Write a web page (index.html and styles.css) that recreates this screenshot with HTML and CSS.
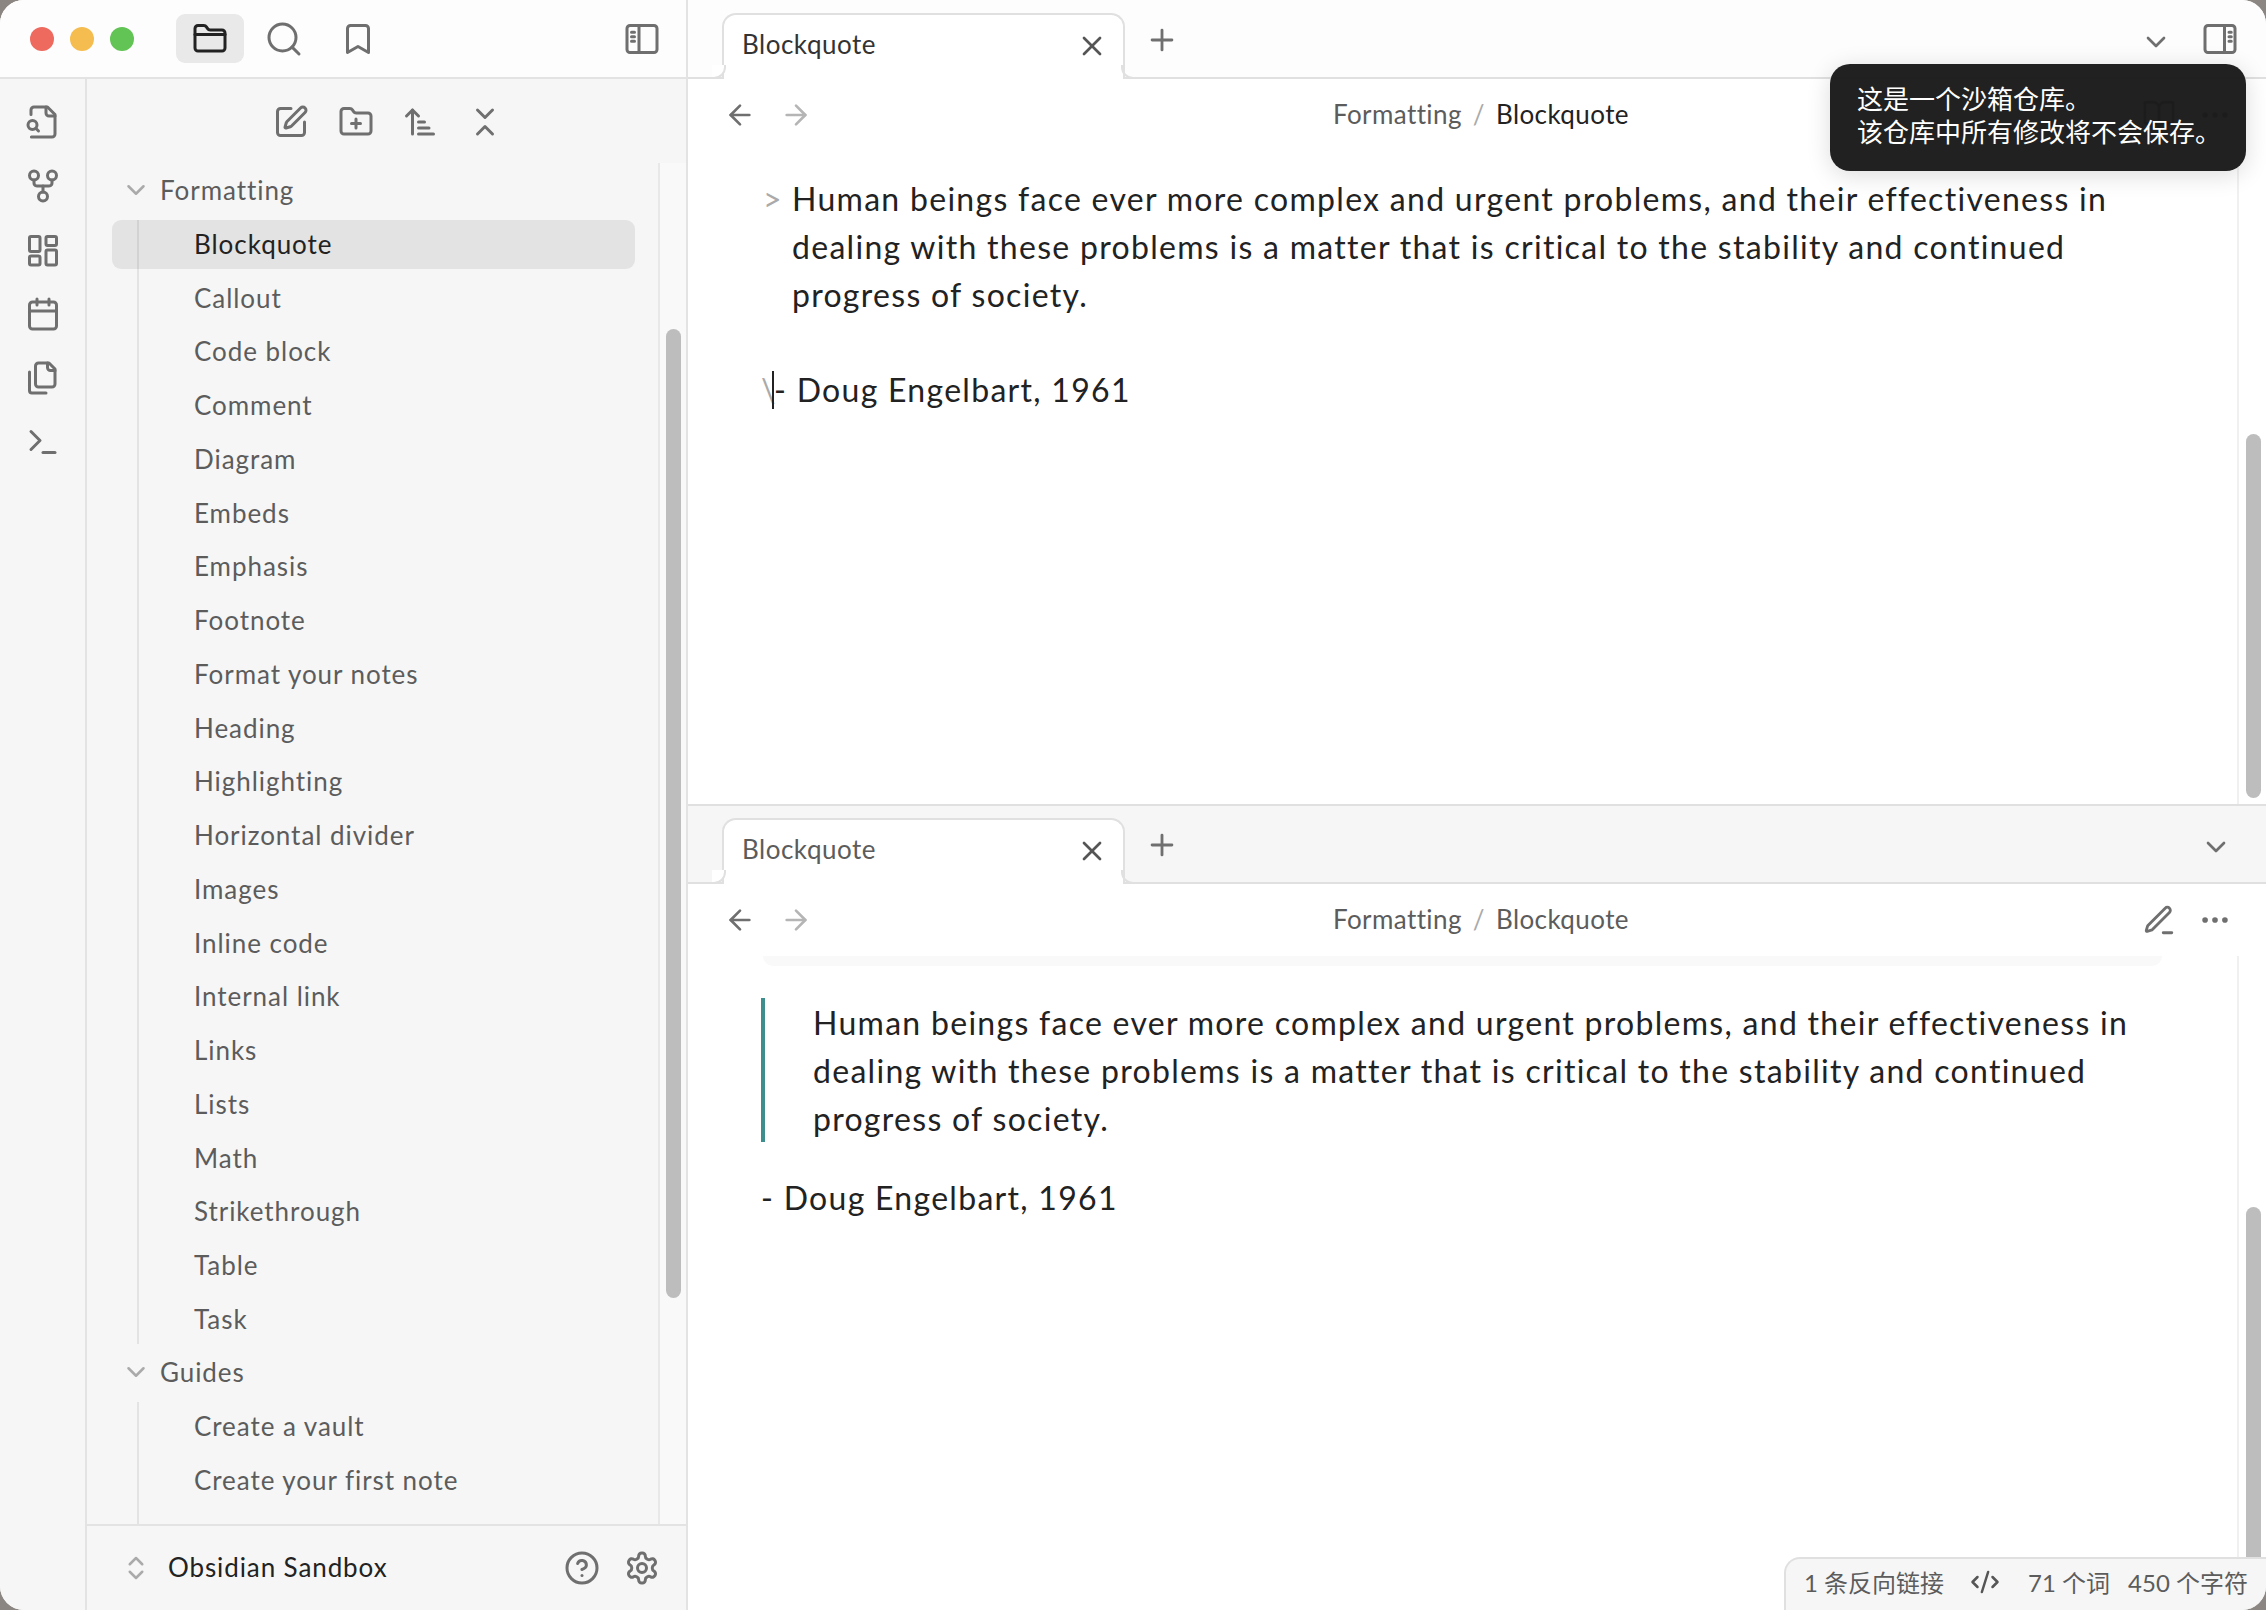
FILE: index.html
```html
<!DOCTYPE html>
<html>
<head>
<meta charset="utf-8"/>
<title>Blockquote - Obsidian Sandbox</title>
<link rel="stylesheet" href="styles.css">
</head>
<body>

<svg class="defs" width="0" height="0">
  <symbol id="i-folder" viewBox="0 0 24 24"><path d="M20 20a2 2 0 0 0 2-2V8a2 2 0 0 0-2-2h-7.9a2 2 0 0 1-1.69-.9L9.6 3.9A2 2 0 0 0 7.93 3H4a2 2 0 0 0-2 2v13a2 2 0 0 0 2 2Z"/><path d="M2 9h20"/></symbol>
  <symbol id="i-search" viewBox="0 0 24 24"><circle cx="11" cy="11" r="9"/><path d="m22 22-4.6-4.6"/></symbol>
  <symbol id="i-bookmark" viewBox="0 0 24 24"><path d="m19 21-7-4-7 4V5a2 2 0 0 1 2-2h10a2 2 0 0 1 2 2v16z"/></symbol>
  <symbol id="i-side-left" viewBox="0 0 24 24"><rect x="2" y="3" width="20" height="18" rx="2"/><path d="M10 3v18M5 7.5h2M5 10.5h2M5 13.5h2"/></symbol>
  <symbol id="i-side-right" viewBox="0 0 24 24"><rect x="2" y="3" width="20" height="18" rx="2"/><path d="M15 3v18M18 7.5h1.5M18 10.5h1.5M18 13.5h1.5"/></symbol>
  <symbol id="i-file-search" viewBox="0 0 24 24"><path d="M14 2v4a2 2 0 0 0 2 2h4"/><path d="M4.268 22H18a2 2 0 0 0 2-2V7l-5-5H6a2 2 0 0 0-2 2v3"/><circle cx="5" cy="14" r="3"/><path d="m9 18-1.8-1.8"/></symbol>
  <symbol id="i-graph" viewBox="0 0 24 24"><circle cx="12" cy="19" r="3"/><circle cx="6" cy="5" r="3"/><circle cx="18" cy="5" r="3"/><path d="M18 8v2c0 .6-.4 2-2 2H8c-1.600 0-2-1.400-2-2V8"/><path d="M12 12v4"/></symbol>
  <symbol id="i-dash" viewBox="0 0 24 24"><rect x="3" y="3" width="7" height="10" rx="1"/><rect x="14" y="3" width="7" height="6" rx="1"/><rect x="14" y="12" width="7" height="10" rx="1"/><rect x="3" y="16" width="7" height="6" rx="1"/></symbol>
  <symbol id="i-calendar" viewBox="0 0 24 24"><path d="M8 2v4M16 2v4"/><rect x="3" y="4" width="18" height="18" rx="2"/><path d="M3 10h18"/></symbol>
  <symbol id="i-files" viewBox="0 0 24 24"><path d="M20 7h-3a2 2 0 0 1-2-2V2"/><path d="M9 18a2 2 0 0 1-2-2V4a2 2 0 0 1 2-2h7l4 4v10a2 2 0 0 1-2 2Z"/><path d="M3 8v12.400A1.600 1.600 0 0 0 4.600 22H14"/></symbol>
  <symbol id="i-terminal" viewBox="0 0 24 24"><path d="m4 17 6-6-6-6"/><path d="M12 19h8"/></symbol>
  <symbol id="i-pen" viewBox="0 0 24 24"><path d="M12 3H5a2 2 0 0 0-2 2v14a2 2 0 0 0 2 2h14a2 2 0 0 0 2-2v-7"/><path d="M18.375 2.625a1 1 0 0 1 3 3l-9.013 9.014a2 2 0 0 1-.853.505l-2.873.84a.5.5 0 0 1-.62-.62l.84-2.873a2 2 0 0 1 .506-.852z"/></symbol>
  <symbol id="i-folder-plus" viewBox="0 0 24 24"><path d="M12 10v6M9 13h6"/><path d="M20 20a2 2 0 0 0 2-2V8a2 2 0 0 0-2-2h-7.9a2 2 0 0 1-1.69-.9L9.6 3.900A2 2 0 0 0 7.930 3H4a2 2 0 0 0-2 2v13a2 2 0 0 0 2 2Z"/></symbol>
  <symbol id="i-sort" viewBox="0 0 24 24"><path d="m3 8 4-4 4 4"/><path d="M7 4v16"/><path d="M11 12h4M11 16h7M11 20h10"/></symbol>
  <symbol id="i-collapse" viewBox="0 0 24 24"><path d="m7 20 5-5 5 5"/><path d="m7 4 5 5 5-5"/></symbol>
  <symbol id="i-chevron" viewBox="0 0 24 24"><path d="m6 9 6 6 6-6"/></symbol>
  <symbol id="i-updown" viewBox="0 0 24 24"><path d="m7 15 5 5 5-5"/><path d="m7 9 5-5 5 5"/></symbol>
  <symbol id="i-help" viewBox="0 0 24 24"><circle cx="12" cy="12" r="10"/><path d="M9.090 9a3 3 0 0 1 5.830 1c0 2-3 3-3 3"/><path d="M12 17h.01"/></symbol>
  <symbol id="i-gear" viewBox="0 0 24 24"><path d="M12.220 2h-.44a2 2 0 0 0-2 2v.18a2 2 0 0 1-1 1.730l-.43.25a2 2 0 0 1-2 0l-.15-.08a2 2 0 0 0-2.730.73l-.22.38a2 2 0 0 0 .73 2.730l.15.1a2 2 0 0 1 1 1.720v.51a2 2 0 0 1-1 1.740l-.15.09a2 2 0 0 0-.73 2.730l.22.38a2 2 0 0 0 2.730.73l.15-.08a2 2 0 0 1 2 0l.43.25a2 2 0 0 1 1 1.730V20a2 2 0 0 0 2 2h.44a2 2 0 0 0 2-2v-.18a2 2 0 0 1 1-1.730l.43-.25a2 2 0 0 1 2 0l.15.08a2 2 0 0 0 2.730-.73l.22-.39a2 2 0 0 0-.73-2.730l-.15-.08a2 2 0 0 1-1-1.740v-.5a2 2 0 0 1 1-1.740l.15-.09a2 2 0 0 0 .73-2.730l-.22-.38a2 2 0 0 0-2.730-.73l-.15.08a2 2 0 0 1-2 0l-.43-.25a2 2 0 0 1-1-1.730V4a2 2 0 0 0-2-2z"/><circle cx="12" cy="12" r="3"/></symbol>
  <symbol id="i-x" viewBox="0 0 24 24"><path d="M18 6 6 18"/><path d="m6 6 12 12"/></symbol>
  <symbol id="i-plus" viewBox="0 0 24 24"><path d="M5 12h14M12 5v14"/></symbol>
  <symbol id="i-back" viewBox="0 0 24 24"><path d="m12 19-7-7 7-7"/><path d="M19 12H5"/></symbol>
  <symbol id="i-forward" viewBox="0 0 24 24"><path d="M5 12h14"/><path d="m12 5 7 7-7 7"/></symbol>
  <symbol id="i-edit" viewBox="0 0 24 24"><path d="M15 21h6"/><path d="M16.376 3.622a1 1 0 0 1 3.002 3.002L7.368 18.635a2 2 0 0 1-.855.506l-2.872.838a.5.5 0 0 1-.62-.62l.838-2.872a2 2 0 0 1 .506-.854z"/></symbol>
  <symbol id="i-book" viewBox="0 0 24 24"><path d="M12 7v14"/><path d="M3 18a1 1 0 0 1-1-1V4a1 1 0 0 1 1-1h5a4 4 0 0 1 4 4 4 4 0 0 1 4-4h5a1 1 0 0 1 1 1v13a1 1 0 0 1-1 1h-6a3 3 0 0 0-3 3 3 3 0 0 0-3-3z"/></symbol>
  <symbol id="i-more" viewBox="0 0 24 24"><circle cx="5" cy="12" r="1"/><circle cx="12" cy="12" r="1"/><circle cx="19" cy="12" r="1"/></symbol>
  <symbol id="i-code" viewBox="0 0 24 24"><path d="m18 16 4-4-4-4"/><path d="m6 8-4 4 4 4"/><path d="m14.500 4-5 16"/></symbol>
</svg>

<div class="window">

  <aside class="left">
    <header class="titlebar">
      <div class="lights">
        <span class="light red"></span>
        <span class="light amber"></span>
        <span class="light green"></span>
      </div>
      <div class="tabs-left">
        <span class="tbtn active"><svg class="icon"><use href="#i-folder"/></svg></span>
        <span class="tbtn"><svg class="icon"><use href="#i-search"/></svg></span>
        <span class="tbtn"><svg class="icon"><use href="#i-bookmark"/></svg></span>
      </div>
      <svg class="icon toggle-left"><use href="#i-side-left"/></svg>
    </header>

    <div class="left-body">
      <nav class="ribbon">
        <svg class="icon"><use href="#i-file-search"/></svg>
        <svg class="icon"><use href="#i-graph"/></svg>
        <svg class="icon"><use href="#i-dash"/></svg>
        <svg class="icon"><use href="#i-calendar"/></svg>
        <svg class="icon"><use href="#i-files"/></svg>
        <svg class="icon"><use href="#i-terminal"/></svg>
      </nav>

      <div class="sidebar">
        <div class="side-tools">
          <svg class="icon"><use href="#i-pen"/></svg>
          <svg class="icon"><use href="#i-folder-plus"/></svg>
          <svg class="icon"><use href="#i-sort"/></svg>
          <svg class="icon"><use href="#i-collapse"/></svg>
        </div>

        <div class="side-scroll">
          <div class="tree">
            <div class="folder"><svg class="icon fold"><use href="#i-chevron"/></svg>Formatting</div>
            <div class="children">
              <div class="note current">Blockquote</div>
              <div class="note">Callout</div>
              <div class="note">Code block</div>
              <div class="note">Comment</div>
              <div class="note">Diagram</div>
              <div class="note">Embeds</div>
              <div class="note">Emphasis</div>
              <div class="note">Footnote</div>
              <div class="note">Format your notes</div>
              <div class="note">Heading</div>
              <div class="note">Highlighting</div>
              <div class="note">Horizontal divider</div>
              <div class="note">Images</div>
              <div class="note">Inline code</div>
              <div class="note">Internal link</div>
              <div class="note">Links</div>
              <div class="note">Lists</div>
              <div class="note">Math</div>
              <div class="note">Strikethrough</div>
              <div class="note">Table</div>
              <div class="note">Task</div>
            </div>
            <div class="folder"><svg class="icon fold"><use href="#i-chevron"/></svg>Guides</div>
            <div class="children children-last">
              <div class="note">Create a vault</div>
              <div class="note">Create your first note</div>
            </div>
          </div>
          <div class="side-gutter"><div class="thumb side-thumb"></div></div>
        </div>

        <footer class="vault">
          <svg class="icon updown"><use href="#i-updown"/></svg>
          <span class="vault-name">Obsidian Sandbox</span>
          <svg class="icon help"><use href="#i-help"/></svg>
          <svg class="icon"><use href="#i-gear"/></svg>
        </footer>
      </div>
    </div>
  </aside>

  <main class="right">

    <section class="pane pane-top">
      <header class="tabbar tabbar-light">
        <div class="tab">
          <span class="tab-title">Blockquote</span>
          <svg class="icon close"><use href="#i-x"/></svg>
        </div>
        <svg class="icon newtab"><use href="#i-plus"/></svg>
        <svg class="icon tabmenu"><use href="#i-chevron"/></svg>
        <svg class="icon toggle-right"><use href="#i-side-right"/></svg>
      </header>
      <div class="navbar">
        <svg class="icon nav-back"><use href="#i-back"/></svg>
        <svg class="icon nav-fwd"><use href="#i-forward"/></svg>
        <div class="crumbs"><span>Formatting</span><span class="sep">/</span><span class="crumb-now">Blockquote</span></div>
        <svg class="icon nav-mode"><use href="#i-book"/></svg>
        <svg class="icon nav-more"><use href="#i-more"/></svg>
      </div>
      <div class="pane-body">
        <div class="doc doc-source">
          <div class="src-quote">
            <span class="mark mark-quote">&gt;</span>
            <p>Human beings face ever more complex and urgent problems, and their effectiveness in<br>dealing with these problems is a matter that is critical to the stability and continued<br>progress of society.</p>
          </div>
          <div class="src-line"><span class="mark mark-slash">\</span><span class="caret"></span>- Doug Engelbart, 1961</div>
        </div>
        <div class="gutter"><div class="thumb top-thumb"></div></div>
      </div>
    </section>

    <section class="pane pane-bottom">
      <header class="tabbar">
        <div class="tab">
          <span class="tab-title">Blockquote</span>
          <svg class="icon close"><use href="#i-x"/></svg>
        </div>
        <svg class="icon newtab"><use href="#i-plus"/></svg>
        <svg class="icon tabmenu-end"><use href="#i-chevron"/></svg>
      </header>
      <div class="navbar">
        <svg class="icon nav-back"><use href="#i-back"/></svg>
        <svg class="icon nav-fwd"><use href="#i-forward"/></svg>
        <div class="crumbs"><span>Formatting</span><span class="sep">/</span><span>Blockquote</span></div>
        <svg class="icon nav-mode"><use href="#i-edit"/></svg>
        <svg class="icon nav-more"><use href="#i-more"/></svg>
      </div>
      <div class="pane-body">
        <div class="doc doc-read">
          <div class="props-end"></div>
          <blockquote>Human beings face ever more complex and urgent problems, and their effectiveness in<br>dealing with these problems is a matter that is critical to the stability and continued<br>progress of society.</blockquote>
          <p class="attrib">- Doug Engelbart, 1961</p>
        </div>
        <div class="gutter"><div class="thumb bottom-thumb"></div></div>
      </div>
    </section>

  </main>

  <div class="notice">这是一个沙箱仓库。<br>该仓库中所有修改将不会保存。</div>

  <div class="status">
    <span class="st-links">1 条反向链接</span>
    <svg class="icon st-code"><use href="#i-code"/></svg>
    <span class="st-words">71 个词</span>
    <span class="st-chars">450 个字符</span>
  </div>

</div>

</body>
</html>
```

FILE: styles.css
```css
* {
  box-sizing: border-box;
}

html, body {
  margin: 0;
  height: 100%;
}

body {
  background-color: #8b8681;
  font-family: Lato, "Noto Sans CJK SC", sans-serif;
  color: #222;
  overflow: hidden;
}

.defs {
  position: absolute;
}

.icon {
  width: 36px;
  height: 36px;
  flex: none;
  fill: none;
  stroke: #6f6f6f;
  stroke-width: 2;
  stroke-linecap: round;
  stroke-linejoin: round;
}

.window {
  position: relative;
  width: 2266px;
  height: 1610px;
  display: flex;
  overflow: hidden;
  border-radius: 24px;
  background-color: #fff;
}

/* left column */
.left {
  width: 688px;
  flex: none;
  display: flex;
  flex-direction: column;
  border-right: 2px solid #e3e3e3;
  background-color: #f6f6f6;
}

.titlebar {
  height: 79px;
  flex: none;
  display: flex;
  align-items: center;
  padding-left: 30px;
  padding-right: 26px;
  background-color: #fdfdfd;
  border-bottom: 2px solid #e3e3e3;
}

.lights {
  display: flex;
  gap: 16px;
}

.light {
  width: 24px;
  height: 24px;
  border-radius: 50%;
}

.red { background-color: #ee6a5f; }
.amber { background-color: #f5bd4f; }
.green { background-color: #61c454; }

.tabs-left {
  display: flex;
  gap: 6px;
  margin-left: 42px;
}

.tbtn {
  width: 68px;
  height: 49px;
  display: flex;
  align-items: center;
  justify-content: center;
  border-radius: 9px;
}

.tbtn.active {
  background-color: #e9e9e9;
}

.tbtn.active .icon {
  stroke: #222;
}

.toggle-left {
  margin-left: auto;
}

.left-body {
  flex: 1;
  display: flex;
  min-height: 0;
}

.ribbon {
  width: 87px;
  flex: none;
  display: flex;
  flex-direction: column;
  align-items: center;
  gap: 28px;
  padding-top: 25px;
  border-right: 2px solid #e3e3e3;
}

.sidebar {
  flex: 1;
  min-width: 0;
  display: flex;
  flex-direction: column;
}

.side-tools {
  height: 84px;
  flex: none;
  display: flex;
  align-items: center;
  justify-content: center;
  gap: 28.500px;
  padding-top: 2px;
  padding-left: 3px;
}

.side-scroll {
  flex: 1;
  min-height: 0;
  display: flex;
  overflow: hidden;
}

.tree {
  flex: 1;
  min-width: 0;
  display: flex;
  flex-direction: column;
  gap: 4.750px;
  padding: 3px 23px 0 23px;
  border-right: 2px solid #e8e8e8;
  font-size: 26px;
  letter-spacing: 0.95px;
  color: #5c5c5c;
}

.folder {
  height: 49px;
  flex: none;
  display: flex;
  align-items: center;
  gap: 9px;
  margin-left: -23px;
  padding-left: 31px;
  padding-bottom: 2px;
}

.fold {
  width: 30px;
  height: 30px;
  stroke: #aaa;
  margin-left: 3px;
}

.children {
  flex: none;
  display: flex;
  flex-direction: column;
  gap: 4.750px;
  margin-left: 27px;
  border-left: 2px solid #e3e3e3;
}

.children-last {
  flex: 1;
}

.note {
  height: 49px;
  flex: none;
  display: flex;
  align-items: center;
  margin-left: -27px;
  padding-left: 82px;
  padding-bottom: 1px;
  border-radius: 9px;
}

.note.current {
  padding-bottom: 0;
  background-color: rgba(0, 0, 0, 0.075);
  color: #222;
}

.side-gutter {
  width: 26px;
  flex: none;
  padding-left: 6px;
  background-color: #f9f9f9;
}

.thumb {
  width: 15px;
  border-radius: 8px;
  background-color: #bdbdbd;
}

.side-thumb {
  margin-top: 166px;
  height: 969px;
}

.vault {
  height: 86px;
  flex: none;
  display: flex;
  align-items: center;
  padding: 0 26px 0 34px;
  border-top: 2px solid #e3e3e3;
}

.updown {
  width: 30px;
  height: 30px;
  stroke: #aaa;
}

.vault-name {
  margin-left: 17px;
  padding-bottom: 2px;
  font-size: 26px;
  letter-spacing: 0.9px;
}

.help {
  margin-left: auto;
  margin-right: 24px;
}

/* the two panes */
.right {
  flex: 1;
  min-width: 0;
  display: flex;
  flex-direction: column;
}

.pane {
  display: flex;
  flex-direction: column;
  min-height: 0;
}

.pane-top {
  height: 804px;
  flex: none;
}

.pane-bottom {
  flex: 1;
  border-top: 2px solid #e0e0e0;
}

.tabbar {
  height: 78px;
  flex: none;
  display: flex;
  align-items: flex-end;
  padding-left: 34px;
  background-color: #f6f6f6;
  border-bottom: 2px solid #e0e0e0;
}

.tabbar-light {
  height: 79px;
  background-color: #fdfdfd;
}

.tab {
  position: relative;
  width: 403px;
  height: 66px;
  flex: none;
  display: flex;
  align-items: center;
  justify-content: space-between;
  margin-bottom: -2px;
  padding: 0 15px 6px 18px;
  background-color: #fff;
  border: 2px solid #e0e0e0;
  border-bottom: none;
  border-radius: 14px 14px 0 0;
  font-size: 26px;
  letter-spacing: 0.5px;
  color: #5c5c5c;
}

.pane-top .tab-title {
  color: #333;
}

.close {
  width: 32px;
  height: 32px;
  stroke: #555;
  margin-bottom: -4px;
}

.tab::before,
.tab::after {
  content: "";
  position: absolute;
  bottom: 0;
  width: 12px;
  height: 12px;
  border-bottom: 2px solid #e0e0e0;
}

.tab::before {
  left: -12px;
  border-right: 2px solid #e0e0e0;
  border-bottom-right-radius: 12px;
  background-color: inherit;
}

.tab::after {
  right: -12px;
  border-left: 2px solid #e0e0e0;
  border-bottom-left-radius: 12px;
}

.newtab {
  width: 34px;
  height: 34px;
  margin-left: 20px;
  margin-bottom: 20px;
}

.tabmenu,
.tabmenu-end {
  margin-left: auto;
  margin-bottom: 19px;
  width: 32px;
  height: 32px;
}

.tabmenu {
  margin-right: 30px;
}

.tabmenu-end {
  margin-right: 34px;
}

.toggle-right {
  margin-right: 28px;
  margin-bottom: 20px;
}

.navbar {
  height: 72px;
  flex: none;
  display: flex;
  align-items: center;
  padding: 0 34px 0 36px;
  background-color: #fff;
}

.nav-back,
.nav-fwd {
  width: 32px;
  height: 32px;
}

.nav-fwd {
  margin-left: 24px;
  stroke: #b5b5b5;
}

.crumbs {
  margin-left: 521px;
  display: flex;
  gap: 11px;
  padding-bottom: 3px;
  font-size: 26px;
  letter-spacing: 0.4px;
  color: #5c5c5c;
}

.sep {
  color: #aaa;
}

.crumb-now {
  color: #222;
}

.nav-mode {
  width: 34px;
  height: 34px;
  margin-left: auto;
}

.nav-more {
  margin-left: 22px;
  width: 34px;
  height: 34px;
  fill: #6f6f6f;
}

.pane-body {
  flex: 1;
  min-height: 0;
  display: flex;
}

.doc {
  flex: 1;
  min-width: 0;
  padding-left: 73px;
  font-size: 32px;
  line-height: 48px;
  letter-spacing: 1.29px;
  white-space: nowrap;
}

.doc p {
  margin: 0;
}

.doc-source {
  padding-top: 24px;
}

.src-quote {
  display: flex;
}

.mark {
  color: #aaa;
}

.mark-quote {
  width: 31px;
  flex: none;
  padding-left: 2px;
}

.src-line {
  display: flex;
  align-items: center;
  margin-top: 47px;
}

.mark-slash {
  width: 11px;
}

.caret {
  width: 2px;
  height: 38px;
  background-color: #222;
}

.props-end {
  width: 1399px;
  height: 10px;
  margin-left: 2px;
  background-color: #f9f9f9;
  border-radius: 0 0 10px 10px;
}

blockquote {
  height: 144px;
  margin: 32px 0 0;
  padding: 1px 0 0 48px;
  border-left: 4px solid #3e8e8e;
}

.doc .attrib {
  margin-top: 32px;
}

.gutter {
  width: 29px;
  flex: none;
  padding-left: 7px;
  border-left: 2px solid #f0f0f0;
}

.top-thumb {
  margin-top: 283px;
  height: 364px;
}

.bottom-thumb {
  margin-top: 251px;
  height: 420px;
}

/* overlays */
.notice {
  position: absolute;
  left: 1830px;
  top: 64px;
  width: 416px;
  height: 107px;
  padding: 19px 0 0 27px;
  border-radius: 20px;
  background-color: rgba(26, 26, 26, 0.97);
  box-shadow: 0 4px 24px rgba(0, 0, 0, 0.14);
  color: #fff;
  font-size: 26px;
  line-height: 33px;
}

.status {
  position: absolute;
  left: 1784px;
  top: 1557px;
  right: 0;
  bottom: 0;
  display: flex;
  align-items: center;
  padding-left: 18px;
  padding-bottom: 6px;
  background-color: #f6f6f6;
  border: 2px solid #e0e0e0;
  border-width: 2px 0 0 2px;
  border-top-left-radius: 16px;
  font-size: 24px;
  color: #5c5c5c;
}

.st-code {
  width: 30px;
  height: 30px;
  margin-left: 26px;
  stroke: #555;
}

.st-words {
  margin-left: 28px;
}

.st-chars {
  margin-left: 18px;
}
```
